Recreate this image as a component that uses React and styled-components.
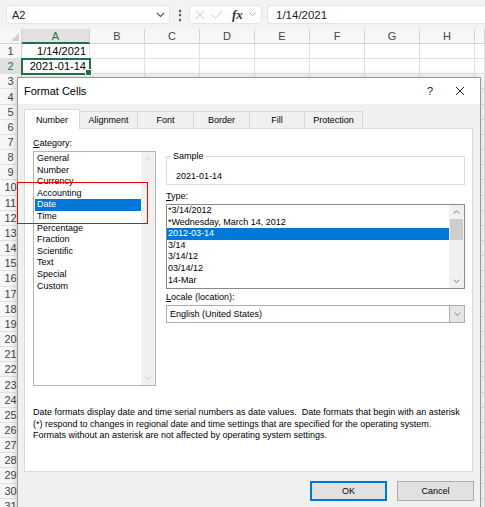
import styled, { createGlobalStyle } from "styled-components";

const GlobalStyle = createGlobalStyle`
  html, body {
    margin: 0;
    padding: 0;
    background: #fff;
  }
  body {
    font-family: "Liberation Sans", Arial, sans-serif;
    color: #000;
  }
  * {
    box-sizing: border-box;
  }
`;

const Screen = styled.div`
  position: relative;
  width: 485px;
  height: 507px;
  overflow: hidden;
  background: #fff;
`;

/* ---------- formula bar ---------- */

const FormulaBar = styled.div`
  height: 29px;
  background: #f3f3f3;
  display: flex;
  align-items: center;
  padding-left: 6px;
`;

const NameBox = styled.div`
  width: 164px;
  height: 19px;
  background: #fff;
  border: 1px solid #e4e4e4;
  border-radius: 4px;
  display: flex;
  align-items: center;
  justify-content: space-between;
  padding: 0 4px 0 5px;
  font-size: 11px;
  color: #222;
`;

const Dots = styled.div`
  width: 19px;
  text-align: center;
  font-size: 12px;
  font-weight: bold;
  color: #444;
  line-height: 1;
`;

const FxBox = styled.div`
  width: 73px;
  height: 19px;
  background: #fff;
  border: 1px solid #e4e4e4;
  border-radius: 4px;
  display: flex;
  align-items: center;
  padding-left: 5px;
  gap: 6px;
`;

const FxLabel = styled.span`
  font-family: "Liberation Serif", "Times New Roman", serif;
  font-style: italic;
  font-weight: bold;
  font-size: 13px;
  color: #333;
  margin-left: 3px;
`;

const FormulaInput = styled.div`
  flex: 1;
  height: 19px;
  margin-left: 5px;
  background: #fff;
  border: 1px solid #e4e4e4;
  border-right: none;
  border-radius: 4px 0 0 4px;
  display: flex;
  align-items: center;
  padding-left: 8px;
  font-size: 11.5px;
  color: #222;
`;

/* ---------- sheet ---------- */

const Sheet = styled.div`
  display: grid;
  grid-template-columns: 22px 68px repeat(7, 55px) 10px;
  grid-template-rows: 15px;
  grid-auto-rows: 15.17px;
  width: 485px;
`;

const Corner = styled.div`
  background: #f7f7f7;
  border-right: 1px solid #d4d4d4;
  border-bottom: 1px solid #d4d4d4;
  position: relative;
  &::after {
    content: "";
    position: absolute;
    right: 2px;
    bottom: 2px;
    border-style: solid;
    border-width: 0 0 8px 8px;
    border-color: transparent transparent #d0d0d0 transparent;
  }
`;

const ColHeader = styled.div`
  background: ${(p) => (p.$active ? "#e1e1e1" : "#f7f7f7")};
  color: ${(p) => (p.$active ? "#1e7145" : "#444")};
  border-right: 1px solid #d4d4d4;
  border-bottom: ${(p) => (p.$active ? "2px solid #1e7145" : "1px solid #d4d4d4")};
  font-size: 11px;
  display: flex;
  align-items: center;
  justify-content: center;
  overflow: hidden;
`;

const RowHeader = styled.div`
  background: ${(p) => (p.$active ? "#e1e1e1" : "#f7f7f7")};
  color: ${(p) => (p.$active ? "#1e7145" : "#444")};
  border-right: 1px solid #d4d4d4;
  border-bottom: 1px solid #e1e1e1;
  font-size: 11px;
  display: flex;
  align-items: center;
  justify-content: center;
`;

const Cell = styled.div`
  position: relative;
  border-right: 1px solid #e1e1e1;
  border-bottom: 1px solid #e1e1e1;
  font-size: 11px;
  color: #000;
  display: flex;
  align-items: center;
  justify-content: flex-end;
  padding-right: 3px;
  ${(p) =>
    p.$selected &&
    `
    outline: 2px solid #1e7145;
    outline-offset: -1px;
    z-index: 1;
    &::after {
      content: "";
      position: absolute;
      right: -3px;
      bottom: -3px;
      width: 5px;
      height: 5px;
      background: #1e7145;
      border: 1px solid #fff;
    }
  `}
`;

/* ---------- dialog ---------- */

const Dialog = styled.div`
  position: absolute;
  left: 17px;
  top: 77px;
  width: 464px;
  height: 440px;
  background: #f0f0f0;
  border: 1px solid #9a9a9a;
  box-shadow: 0 0 8px rgba(0, 0, 0, 0.22);
  display: flex;
  flex-direction: column;
`;

const TitleBar = styled.div`
  height: 26px;
  background: #fff;
  display: flex;
  align-items: center;
  padding: 0 5px 0 6px;
`;

const Title = styled.div`
  flex: 1;
  font-size: 11px;
`;

const TitleButton = styled.div`
  width: 30px;
  height: 26px;
  display: flex;
  align-items: center;
  justify-content: center;
  font-size: 11px;
  color: #222;
`;

const Body = styled.div`
  padding: 5px 7px 0 6px;
`;

const TabRow = styled.div`
  display: flex;
  align-items: flex-end;
  height: 19px;
  position: relative;
  z-index: 1;
`;

const Tab = styled.div`
  width: ${(p) => p.$w}px;
  height: ${(p) => (p.$active ? 20 : 17)}px;
  margin-bottom: ${(p) => (p.$active ? -1 : 0)}px;
  margin-left: -1px;
  &:first-child {
    margin-left: 0;
  }
  background: ${(p) => (p.$active ? "#fff" : "#f0f0f0")};
  border: 1px solid #d9d9d9;
  border-bottom: none;
  font-size: 9px;
  display: flex;
  align-items: center;
  justify-content: center;
`;

const Panel = styled.div`
  width: 449px;
  height: 344px;
  background: #fff;
  border: 1px solid #d9d9d9;
  padding: 8px 7px 0 8px;
`;

const Columns = styled.div`
  display: flex;
`;

const LeftColumn = styled.div`
  width: 123px;
`;

const RightColumn = styled.div`
  width: 299px;
  margin-left: 10px;
  padding-top: 19px;
`;

const FieldLabel = styled.div`
  font-size: 9px;
  line-height: 12px;
  height: 12px;
  margin-top: ${(p) => p.$top || 0}px;
  margin-bottom: 2px;
`;

const ListBox = styled.div`
  height: ${(p) => p.$h}px;
  border: 1px solid ${(p) => p.$border};
  display: flex;
`;

const ListItems = styled.div`
  flex: 1;
  padding: ${(p) => p.$pad};
`;

const ListItem = styled.div`
  height: 11.6px;
  line-height: 11.6px;
  font-size: 9px;
  padding-left: ${(p) => p.$indent}px;
  white-space: nowrap;
  background: ${(p) => (p.$selected ? "#0078d7" : "transparent")};
  color: ${(p) => (p.$selected ? "#fff" : "#000")};
`;

const ScrollTrack = styled.div`
  width: ${(p) => p.$w}px;
  background: #f0f0f0;
  display: flex;
  flex-direction: column;
`;

const ScrollArrow = styled.div`
  height: 14px;
  display: flex;
  align-items: center;
  justify-content: center;
`;

const ScrollSpace = styled.div`
  flex: 1;
`;

const ScrollThumb = styled.div`
  height: 21px;
  margin: 0 1px;
  background: #cdcdcd;
`;

const SampleBox = styled.div`
  position: relative;
  height: 29px;
  border: 1px solid #dcdcdc;
  padding: 13px 0 0 9px;
  font-size: 9px;
  line-height: 12px;
`;

const Legend = styled.span`
  position: absolute;
  left: 4px;
  top: -7px;
  padding: 0 2px;
  background: #fff;
  font-size: 9px;
  line-height: 12px;
`;

const Combo = styled.div`
  height: 18px;
  border: 1px solid #acacac;
  display: flex;
  font-size: 9px;
  align-items: stretch;
`;

const ComboText = styled.div`
  flex: 1;
  padding-left: 3px;
  display: flex;
  align-items: center;
`;

const ComboButton = styled.div`
  width: 15px;
  background: #e5e5e5;
  border-left: 1px solid #acacac;
  display: flex;
  align-items: center;
  justify-content: center;
`;

const Description = styled.div`
  margin-top: 21px;
  font-size: 9px;
  line-height: 11.5px;
  white-space: pre;
`;

const ButtonRow = styled.div`
  display: flex;
  justify-content: flex-end;
  gap: 10px;
  margin-top: 9px;
  margin-right: -1px;
`;

const Button = styled.div`
  width: 77px;
  height: 20px;
  background: #e1e1e1;
  border: 1px solid ${(p) => (p.$primary ? "#0078d7" : "#adadad")};
  box-shadow: ${(p) => (p.$primary ? "inset 0 0 0 1px #0078d7" : "none")};
  font-size: 9px;
  display: flex;
  align-items: center;
  justify-content: center;
`;

const Highlight = styled.div`
  position: absolute;
  left: 17px;
  top: 182px;
  width: 131px;
  height: 42px;
  border: 1.5px solid #f00;
  pointer-events: none;
`;

/* ---------- icons ---------- */

const Chevron = ({ up, color = "#606060", size = 7 }) => (
  <svg width={size} height={size * 0.6} viewBox="0 0 10 6">
    <polyline
      points={up ? "1,5 5,1 9,5" : "1,1 5,5 9,1"}
      fill="none"
      stroke={color}
      strokeWidth="1.2"
    />
  </svg>
);

const Cross = ({ size = 10, color = "#333", width = 1 }) => (
  <svg width={size} height={size} viewBox="0 0 10 10">
    <path d="M1 1 L9 9 M9 1 L1 9" stroke={color} strokeWidth={width} />
  </svg>
);

const Check = () => (
  <svg width="12" height="10" viewBox="0 0 12 10">
    <polyline points="1,5 4.5,8.5 11,1" fill="none" stroke="#c8c8c8" strokeWidth="1" />
  </svg>
);

/* ---------- data ---------- */

const columns = ["A", "B", "C", "D", "E", "F", "G", "H", ""];
const values = { A1: "1/14/2021", A2: "2021-01-14" };
const rows = Array.from({ length: 31 }, (_, i) => i + 1);

const tabs = [
  { label: "Number", w: 56, active: true },
  { label: "Alignment", w: 59 },
  { label: "Font", w: 57 },
  { label: "Border", w: 57 },
  { label: "Fill", w: 56 },
  { label: "Protection", w: 59 },
];

const categories = [
  "General",
  "Number",
  "Currency",
  "Accounting",
  "Date",
  "Time",
  "Percentage",
  "Fraction",
  "Scientific",
  "Text",
  "Special",
  "Custom",
];

const types = [
  "*3/14/2012",
  "*Wednesday, March 14, 2012",
  "2012-03-14",
  "3/14",
  "3/14/12",
  "03/14/12",
  "14-Mar",
];

const description =
  "Date formats display date and time serial numbers as date values.  Date formats that begin with an asterisk\n" +
  "(*) respond to changes in regional date and time settings that are specified for the operating system.\n" +
  "Formats without an asterisk are not affected by operating system settings.";

const App = () => {
  return (
    <Screen>
      <GlobalStyle />
      <FormulaBar>
        <NameBox>
          <span>A2</span>
          <Chevron color="#444" size={9} />
        </NameBox>
        <Dots>⋮</Dots>
        <FxBox>
          <Cross size={10} color="#c8c8c8" />
          <Check />
          <FxLabel>fx</FxLabel>
          <Chevron color="#999" size={7} />
        </FxBox>
        <FormulaInput>1/14/2021</FormulaInput>
      </FormulaBar>

      <Sheet>
        <Corner />
        {columns.map((c, i) => (
          <ColHeader key={"c" + i} $active={c === "A"}>
            {c}
          </ColHeader>
        ))}
        {rows.map((r) => [
          <RowHeader key={"r" + r} $active={r === 2}>
            {r}
          </RowHeader>,
          ...columns.map((c, i) => (
            <Cell key={i + "-" + r} $selected={c === "A" && r === 2}>
              {values[c + r]}
            </Cell>
          )),
        ])}
      </Sheet>

      <Dialog>
        <TitleBar>
          <Title>Format Cells</Title>
          <TitleButton>?</TitleButton>
          <TitleButton>
            <Cross size={10} color="#222" />
          </TitleButton>
        </TitleBar>
        <Body>
          <TabRow>
            {tabs.map((t) => (
              <Tab key={t.label} $w={t.w} $active={t.active}>
                {t.label}
              </Tab>
            ))}
          </TabRow>
          <Panel>
            <Columns>
              <LeftColumn>
                <FieldLabel>
                  <u>C</u>ategory:
                </FieldLabel>
                <ListBox $h={235} $border="#b4b4b4">
                  <ListItems $pad="1px 0 0 1px">
                    {categories.map((c) => (
                      <ListItem key={c} $indent={2} $selected={c === "Date"}>
                        {c}
                      </ListItem>
                    ))}
                  </ListItems>
                  <ScrollTrack $w={14}>
                    <ScrollArrow>
                      <Chevron up color="#c4c4c4" />
                    </ScrollArrow>
                    <ScrollSpace />
                    <ScrollArrow>
                      <Chevron color="#c4c4c4" />
                    </ScrollArrow>
                  </ScrollTrack>
                </ListBox>
              </LeftColumn>

              <RightColumn>
                <SampleBox>
                  <Legend>Sample</Legend>
                  2021-01-14
                </SampleBox>
                <FieldLabel $top={5}>
                  <u>T</u>ype:
                </FieldLabel>
                <ListBox $h={85} $border="#8a8a8a">
                  <ListItems $pad="0">
                    {types.map((t) => (
                      <ListItem key={t} $indent={1} $selected={t === "2012-03-14"}>
                        {t}
                      </ListItem>
                    ))}
                  </ListItems>
                  <ScrollTrack $w={15}>
                    <ScrollArrow>
                      <Chevron up />
                    </ScrollArrow>
                    <ScrollThumb />
                    <ScrollSpace />
                    <ScrollArrow>
                      <Chevron />
                    </ScrollArrow>
                  </ScrollTrack>
                </ListBox>
                <FieldLabel $top={2}>
                  <u>L</u>ocale (location):
                </FieldLabel>
                <Combo>
                  <ComboText>English (United States)</ComboText>
                  <ComboButton>
                    <Chevron color="#707070" />
                  </ComboButton>
                </Combo>
              </RightColumn>
            </Columns>
            <Description>{description}</Description>
          </Panel>
          <ButtonRow>
            <Button $primary>OK</Button>
            <Button>Cancel</Button>
          </ButtonRow>
        </Body>
      </Dialog>

      <Highlight />
    </Screen>
  );
};

export default App;
